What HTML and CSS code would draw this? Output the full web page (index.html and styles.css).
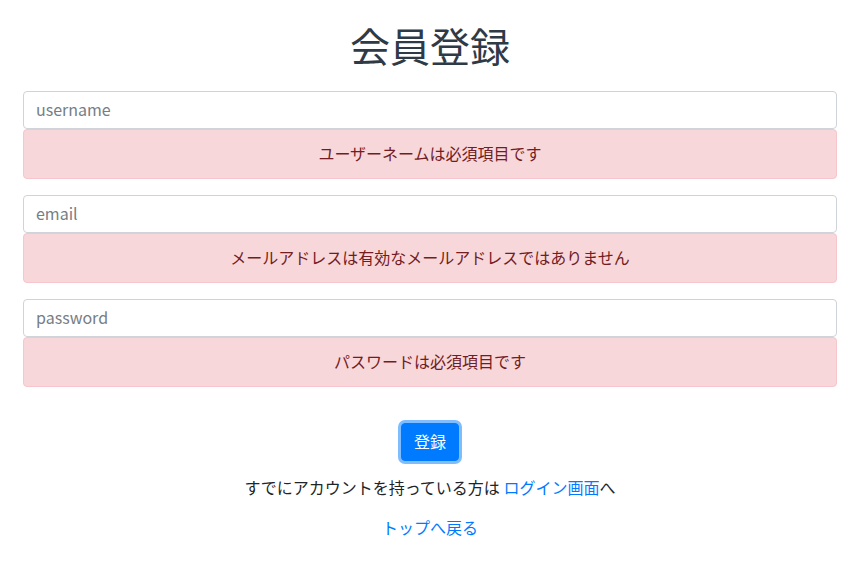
FILE: index.html
```html
<!DOCTYPE html>
<html lang="ja">
<head>
<meta charset="utf-8">
<title>会員登録</title>
<link rel="stylesheet" href="styles.css">
</head>
<body>
<div class="container">
  <h1 class="title">会員登録</h1>
  <form class="form">
    <div class="group">
      <input class="input" type="text" placeholder="username">
      <div class="alert">ユーザーネームは必須項目です</div>
    </div>
    <div class="group">
      <input class="input" type="text" placeholder="email">
      <div class="alert">メールアドレスは有効なメールアドレスではありません</div>
    </div>
    <div class="group">
      <input class="input" type="password" placeholder="password">
      <div class="alert">パスワードは必須項目です</div>
    </div>
    <div class="actions">
      <button class="btn" type="button">登録</button>
    </div>
  </form>
  <p class="note">すでにアカウントを持っている方は <a class="link" href="#">ログイン画面</a>へ</p>
  <p class="back"><a class="link" href="#">トップへ戻る</a></p>
</div>
</body>
</html>
```

FILE: styles.css
```css
* { box-sizing: border-box; }
html, body { margin: 0; padding: 0; background: #fff; }
body {
  font-family: "Noto Sans CJK JP", "Noto Sans", sans-serif;
  font-size: 16px;
  line-height: 24px;
  color: #212529;
}
.container {
  padding: 0 24px 0 23px;
}
.title {
  margin: 21px 0 22px;
  font-size: 40px;
  line-height: 48px;
  font-weight: 400;
  text-align: center;
  color: #2f3a47;
}
.form { margin: 0; }
.group {
  display: flex;
  flex-direction: column;
  margin-bottom: 16px;
}
.input {
  display: block;
  width: 100%;
  height: 38px;
  padding: 5px 12px 7px;
  font-family: inherit;
  font-size: 16px;
  line-height: 24px;
  color: #495057;
  background: #fff;
  border: 1px solid #ced4da;
  border-radius: 4px;
  outline: none;
}
.input::placeholder { color: #777d84; }
.alert {
  padding: 11px 20px 13px;
  background: #f8d7da;
  border: 1px solid #f5c6cb;
  border-radius: 4px;
  color: #721c24;
  text-align: center;
}
.actions {
  display: flex;
  justify-content: center;
  padding-top: 20px;
}
.btn {
  font-family: inherit;
  font-size: 16px;
  line-height: 24px;
  padding: 5px 12px 7px;
  color: #fff;
  background: #007bff;
  border: 1px solid #007bff;
  border-radius: 4px;
  box-shadow: 0 0 0 3px rgba(0, 123, 255, 0.5);
  cursor: pointer;
}
.note {
  margin: 14px 0 0;
  text-align: center;
}
.back {
  margin: 16px 0 0;
  text-align: center;
}
.link {
  color: #007bff;
  text-decoration: none;
}
```
